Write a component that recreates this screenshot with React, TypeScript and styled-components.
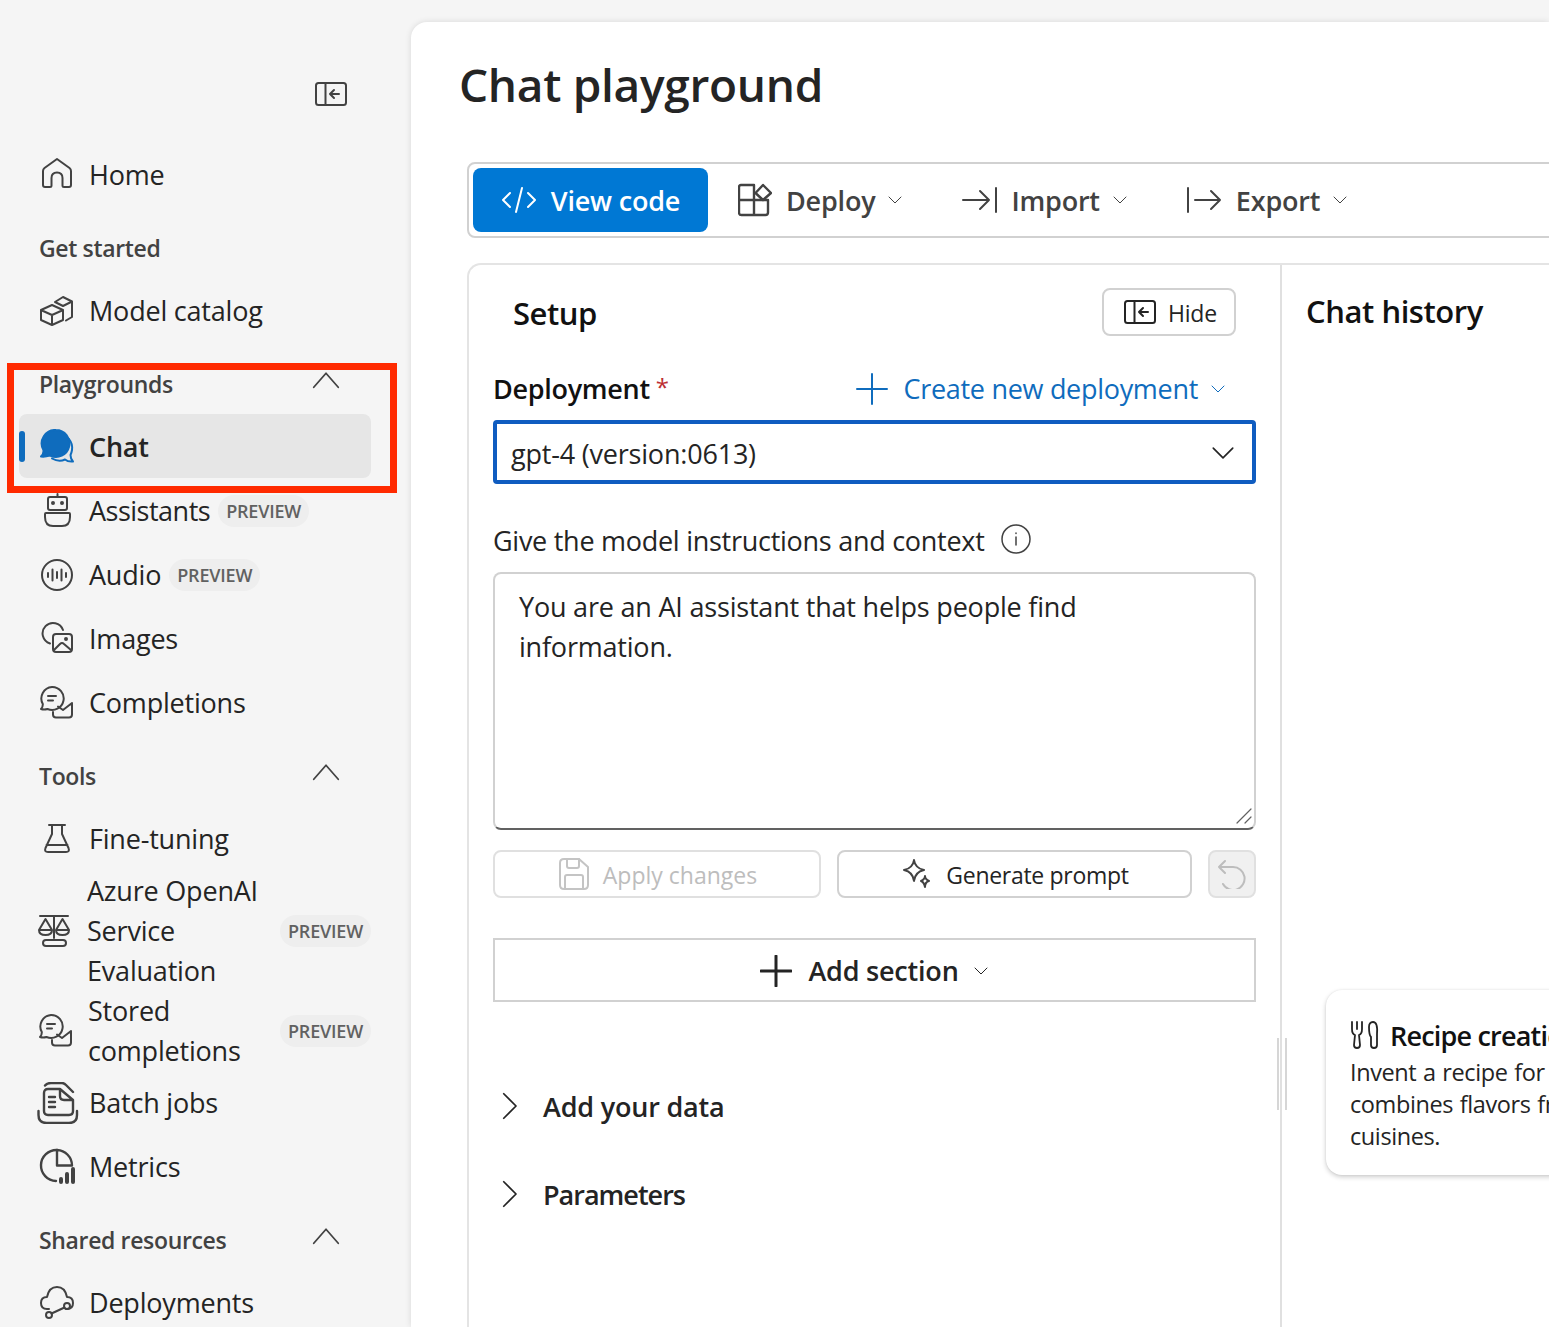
import * as React from 'react';
import styled, { createGlobalStyle } from 'styled-components';

const GlobalStyle = createGlobalStyle`
  html, body {
    margin: 0;
    padding: 0;
    background: #f5f5f5;
    overflow: hidden;
  }
  * {
    box-sizing: border-box;
  }
`;

const fontStack = `"Open Sans", "Noto Sans", "Liberation Sans", sans-serif`;

const Page = styled.div`
  position: relative;
  display: flex;
  width: 1549px;
  height: 1327px;
  overflow: hidden;
  background: #f5f5f5;
  font-family: ${fontStack};
  color: #242424;
  letter-spacing: -0.2px;
`;

const Sidebar = styled.nav`
  flex: none;
  width: 411px;
  padding: 0 40px 0 19px;
`;

const CollapseRow = styled.div`
  display: flex;
  justify-content: flex-end;
  height: 143px;
  padding: 82px 24px 0 0;
`;

const Icon = styled.svg<{ $color?: string; $weight?: number }>`
  flex: none;
  display: block;
  fill: none;
  stroke: ${(p) => p.$color || '#424242'};
  stroke-width: ${(p) => p.$weight || 2};
  stroke-linecap: round;
  stroke-linejoin: round;
`;

const WideIcon = styled(Icon)`
  margin: 0 -4px 0 -2px;
`;

const MetricsGlyph = styled(Icon)`
  margin-right: -2px;
`;

const SectionRow = styled.div`
  display: flex;
  align-items: center;
  justify-content: space-between;
  height: 72px;
  padding: 9px 31px 0 20px;
  font-size: 23px;
  font-weight: 600;
  color: #424242;
  letter-spacing: -0.35px;
`;

const SectionChevron = styled.span`
  display: flex;
  margin-top: -3px;
`;

const NavRow = styled.div<{ $active?: boolean }>`
  position: relative;
  display: flex;
  align-items: center;
  gap: 14px;
  height: 64px;
  padding-left: 20px;
  border-radius: 8px;
  font-size: 27px;
  font-weight: ${(p) => (p.$active ? 600 : 400)};
  line-height: 40px;
  color: #242424;
  background: ${(p) => (p.$active ? '#e6e6e6' : 'transparent')};
  ${(p) => p.$active && 'margin: -1px 0 1px; padding-top: 1px;'}
`;

const WrappedNavRow = styled.div<{ $inset: number }>`
  display: flex;
  align-items: center;
  gap: 14px;
  padding-left: ${(p) => p.$inset}px;
  font-size: 27px;
  line-height: 40px;
  color: #242424;
`;

const ActiveMark = styled.span`
  position: absolute;
  left: 0;
  top: 17px;
  width: 6px;
  height: 31px;
  border-radius: 3px;
  background: #0f6cbd;
`;

const NavLabel = styled.span<{ $tight?: boolean }>`
  flex: none;
  ${(p) => p.$tight && 'letter-spacing: -0.5px;'}
`;

const WrappedLabel = styled.span`
  flex: 1;
  max-width: 190px;
`;

const PreviewBadge = styled.span<{ $end?: boolean }>`
  flex: none;
  display: inline-flex;
  align-items: center;
  justify-content: center;
  width: 91px;
  height: 32px;
  margin-left: ${(p) => (p.$end ? 'auto' : '-6px')};
  border-radius: 16px;
  background: #eeeeee;
  font-size: 18px;
  font-weight: 600;
  color: #616161;
  letter-spacing: -0.2px;
`;

const Main = styled.main`
  flex: 1;
  min-width: 0;
  margin-top: 22px;
  padding: 30px 0 0 48px;
  overflow: hidden;
  background: #ffffff;
  border-top-left-radius: 16px;
  box-shadow: 0 0 6px rgba(0, 0, 0, 0.12);
`;

const Title = styled.h1`
  margin: 0;
  height: 110px;
  font-size: 46px;
  line-height: 64px;
  font-weight: 600;
  color: #242424;
  letter-spacing: -0.3px;
`;

const Toolbar = styled.div`
  display: flex;
  align-items: center;
  width: 1200px;
  height: 76px;
  margin-left: 8px;
  padding: 0 4px;
  border: 2px solid #d1d1d1;
  border-radius: 8px;
`;

const PrimaryButton = styled.div`
  flex: none;
  display: flex;
  align-items: center;
  justify-content: center;
  gap: 14px;
  width: 235px;
  height: 64px;
  border-radius: 8px;
  background: #0078d4;
  color: #ffffff;
  font-size: 27px;
  font-weight: 600;
`;

const ToolButton = styled.div`
  flex: none;
  display: flex;
  align-items: center;
  gap: 14px;
  padding: 0 28px 0 30px;
  font-size: 27px;
  font-weight: 600;
  color: #424242;
`;

const ChevronGap = styled.span<{ $pull?: number }>`
  display: flex;
  margin-left: -${(p) => p.$pull || 2}px;
`;

const Workspace = styled.div`
  position: relative;
  display: flex;
  width: 1200px;
  height: 1100px;
  margin: 25px 0 0 8px;
  border-top: 2px solid #e4e4e4;
  border-left: 2px solid #e4e4e4;
  border-top-left-radius: 14px;
`;

const SetupPane = styled.section`
  flex: none;
  width: 813px;
  padding: 23px 24px 0;
  border-right: 2px solid #e0e0e0;
`;

const SetupHead = styled.div`
  display: flex;
  align-items: center;
  justify-content: space-between;
  height: 48px;
  padding: 0 20px;
`;

const PaneTitle = styled.h2`
  margin: 0;
  font-size: 31px;
  line-height: 46px;
  font-weight: 600;
  color: #111111;
  letter-spacing: -0.45px;
`;

const SetupTitle = styled(PaneTitle)`
  padding-top: 2px;
`;

const ButtonText = styled.span`
  padding-top: 2px;
`;

const HideButton = styled.div`
  display: flex;
  align-items: center;
  gap: 12px;
  width: 134px;
  height: 48px;
  padding-left: 20px;
  border: 2px solid #d1d1d1;
  border-radius: 8px;
  font-size: 23px;
  color: #242424;
`;

const DeploymentRow = styled.div`
  display: flex;
  align-items: center;
  justify-content: space-between;
  height: 84px;
  padding: 21px 30px 0 0;
`;

const FieldLabel = styled.span`
  display: flex;
  font-size: 27px;
  font-weight: 600;
  letter-spacing: -0.3px;
  color: #111111;
`;

const Required = styled.span`
  margin-left: 6px;
  font-size: 24px;
  font-weight: 400;
  color: #bc2f32;
`;

const CreateLink = styled.span`
  display: flex;
  align-items: center;
  gap: 16px;
  font-size: 27px;
  letter-spacing: -0.3px;
  color: #0f6cbd;
`;

const SelectBox = styled.div`
  display: flex;
  align-items: center;
  justify-content: space-between;
  height: 64px;
  padding: 2px 16px 0 14px;
  border: 4px solid #0f5cc0;
  border-radius: 4px;
  font-size: 27px;
  color: #242424;
`;

const InstructionRow = styled.div`
  display: flex;
  align-items: center;
  gap: 16px;
  height: 88px;
  padding-top: 24px;
  font-size: 27px;
  letter-spacing: -0.27px;
  color: #242424;
`;

const PromptBox = styled.div`
  position: relative;
  height: 258px;
  padding: 13px 24px;
  border: 2px solid #d1d1d1;
  border-bottom-color: #616161;
  border-radius: 8px;
  font-size: 27px;
  line-height: 40px;
  color: #242424;
`;

const ResizeGrip = styled.span`
  position: absolute;
  right: 1px;
  bottom: 3px;
  display: flex;
`;

const Actions = styled.div`
  display: flex;
  gap: 16px;
  height: 48px;
  margin-top: 20px;
`;

const ActionButton = styled.div<{ $width: number; $disabled?: boolean }>`
  flex: none;
  display: flex;
  align-items: center;
  justify-content: center;
  gap: 14px;
  width: ${(p) => p.$width}px;
  padding-left: 2px;
  border: 2px solid ${(p) => (p.$disabled ? '#e0e0e0' : '#d1d1d1')};
  border-radius: 8px;
  font-size: 23px;
  letter-spacing: ${(p) => (p.$disabled ? '0' : '-0.3px')};
  color: ${(p) => (p.$disabled ? '#bdbdbd' : '#242424')};
`;

const UndoButton = styled.div`
  flex: none;
  display: flex;
  align-items: center;
  justify-content: center;
  width: 48px;
  border: 2px solid #e0e0e0;
  border-radius: 8px;
  background: #f0f0f0;
`;

const AddSection = styled.div`
  display: flex;
  align-items: center;
  justify-content: center;
  gap: 16px;
  height: 64px;
  margin-top: 40px;
  padding-top: 1px;
  border: 2px solid #d1d1d1;
  font-size: 27px;
  font-weight: 600;
  color: #242424;
`;

const AccordionList = styled.div`
  margin-top: 60px;
`;

const AccordionRow = styled.div`
  display: flex;
  align-items: center;
  gap: 20px;
  height: 88px;
  padding-left: 2px;
  font-size: 27px;
  font-weight: 600;
  color: #242424;
`;

const AccordionLabel = styled.span<{ $tight?: boolean }>`
  ${(p) => p.$tight && 'letter-spacing: -1px;'}
`;

const DragHandle = styled.div`
  position: absolute;
  left: 808px;
  top: 773px;
  width: 10px;
  height: 72px;
  border-left: 2px solid #d6d6d6;
  border-right: 2px solid #d6d6d6;
`;

const HistoryPane = styled.section`
  flex: 1;
  padding: 23px 0 0 24px;
`;

const Card = styled.div`
  width: 430px;
  height: 185px;
  margin: 656px 0 0 20px;
  padding: 27px 24px;
  border-radius: 16px;
  background: #ffffff;
  box-shadow: 0 2px 5px rgba(0, 0, 0, 0.2), 0 0 2px rgba(0, 0, 0, 0.08);
`;

const CardTitle = styled.div`
  display: flex;
  align-items: center;
  gap: 10px;
  height: 36px;
  font-size: 27px;
  font-weight: 600;
  letter-spacing: -0.8px;
  color: #111111;
  white-space: nowrap;
`;

const CardBody = styled.div`
  margin-top: 3px;
  font-size: 23.5px;
  line-height: 32px;
  letter-spacing: -0.4px;
  word-spacing: 1px;
  color: #242424;
`;

const RedBox = styled.div`
  position: absolute;
  left: 7px;
  top: 363px;
  width: 390px;
  height: 130px;
  border: 7px solid #ff2a00;
  pointer-events: none;
`;

const ChevronIcon = styled(Icon)`
  stroke-width: 1;
`;

const Chevron = ({ size = 16, dir = 'down', color }: { size?: number; dir?: 'down' | 'up' | 'right'; color?: string }) => {
  const points = dir === 'down' ? '2,5 8,11 14,5' : dir === 'up' ? '1,11 8,3 15,11' : '5,1 12,8 5,15';
  return (
    <ChevronIcon width={size} height={size} viewBox="0 0 16 16" $color={color}>
      <polyline points={points} />
    </ChevronIcon>
  );
};

const CollapseChevron = () => (
  <SectionChevron>
    <Chevron size={28} dir="up" />
  </SectionChevron>
);

const PanelIcon = ({ color }: { color?: string }) => (
  <Icon width="32" height="24" viewBox="0 0 32 24" $color={color}>
    <rect x="1" y="1" width="30" height="22" rx="2.5" />
    <path d="M10.5 1v22M24 12H15M19 8l-4 4 4 4" />
  </Icon>
);

const HomeIcon = () => (
  <Icon width="36" height="36" viewBox="0 0 36 36">
    <path d="M18 2 5.500 11Q4 12.200 4 14V28Q4 30 6 30h5q1.500 0 1.500-1.500V21q0-5.500 5.500-5.500t5.500 5.500v7.500Q23.500 30 25 30h5q2 0 2-2V14q0-1.800-1.500-3z" />
  </Icon>
);

const CubeIcon = () => (
  <Icon width="36" height="36" viewBox="0 0 36 36">
    <path d="M13 12 24 17V27L13 32 2 27V17zM3 17.500 13 22 23 17.500M13 22V32" />
    <path d="M16 9 24 4l9 4.500V24L27 27.500M16 9l8 4 9-4.500" />
  </Icon>
);

const ChatIcon = () => (
  <Icon width="36" height="36" viewBox="0 0 36 36" $color="#0f6cbd">
    <path fill="#0f6cbd" d="M17 1a13.500 13.500 0 1 1-6 25.600Q6 28 2 27.500q3-3 2.400-6.500A13.500 13.500 0 0 1 17 1z" />
    <path d="M30 10q4 5 3 11-.5 3-1.500 5 0 4 2.500 6.500-5 .5-8-2-6 3-13-1" />
  </Icon>
);

const RobotIcon = () => (
  <Icon width="36" height="36" viewBox="0 0 36 36">
    <rect x="9" y="4" width="19" height="13" rx="2" />
    <path d="M18.500 1v3" />
    <circle cx="14" cy="10" r="1" />
    <circle cx="23" cy="10" r="1" />
    <path d="M6 21q0-1 1-1H30q1 0 1 1v3q0 9-8 9H14q-8 0-8-9z" />
  </Icon>
);

const AudioIcon = () => (
  <Icon width="36" height="36" viewBox="0 0 36 36">
    <circle cx="18" cy="18" r="15" />
    <path d="M9 16v4M13.500 12.500v11M18 15v6M22.500 12.500v11M27 16v4" />
  </Icon>
);

const ImagesIcon = () => (
  <Icon width="36" height="36" viewBox="0 0 36 36">
    <path d="M11 22.500A10.500 10.500 0 1 1 24 9" />
    <rect x="14" y="13" width="19" height="18" rx="3" />
    <path d="M15 29l6-6q2-2 4 0l7 6" />
    <circle cx="27" cy="18" r="1" />
  </Icon>
);

const CompletionsIcon = () => (
  <Icon width="36" height="36" viewBox="0 0 36 36">
    <path d="M13 2a11.500 11.500 0 1 1-4.500 22Q5 25 2 24q2-2 1.800-5A11.500 11.500 0 0 1 13 2z" />
    <path d="M9 11h8M9 15.500h5" />
    <path d="M14 27v2.500q0 3 3 3H30q3 0 3-3V18L24 25 19 21.500" />
  </Icon>
);

const FlaskIcon = () => (
  <Icon width="36" height="36" viewBox="0 0 36 36">
    <path d="M10 4H26M13 4V13L6.500 27Q5 31 9 31H27Q31 31 29.500 27L23 13V4M7.500 24H28.500" />
  </Icon>
);

const ScalesIcon = () => (
  <Icon width="36" height="36" viewBox="0 0 36 36">
    <path d="M3 3H31M17 3V25" />
    <path d="M8.500 6 2 17h13zM2 17q0 5 6.500 5t6.500-5" />
    <path d="M25.500 6 19 17h13zM19 17q0 5 6.500 5t6.500-5" />
    <rect x="6" y="27" width="23" height="6" rx="3" />
  </Icon>
);

const BatchIcon = () => (
  <WideIcon width="42" height="42" viewBox="0 0 42 42" $weight={2.4}>
    <path d="M8 3.500Q10 1 14 1H25Q27 1 29 3L36 10" />
    <path d="M7 11q0-4 4-4H23L36 18V29q0 4-4 4H11q-4 0-4-4zM23 8v6q0 4 4 4h8" />
    <path d="M12 15h6M12 20h6M12 25h6" />
    <path d="M1.500 29v4q0 8 8 8H32q8 0 8-8V29" />
  </WideIcon>
);

const MetricsIcon = () => (
  <MetricsGlyph width="38" height="38" viewBox="0 0 38 38" $weight={2.4}>
    <path d="M18 2A15.500 15.500 0 1 0 17 33" />
    <path d="M18 2A15.500 15.500 0 0 1 33 17.500H18z" />
    <path d="M22 31v3M28 26v8M34 21v13" strokeWidth={4} />
  </MetricsGlyph>
);

const CloudIcon = () => (
  <Icon width="36" height="36" viewBox="0 0 36 36">
    <path d="M10 24H8Q2 24 2 18T8 12Q10 2 18 2T28 12Q34 12 34 18T28 24H27" />
    <circle cx="10" cy="30" r="3" />
    <circle cx="28" cy="21" r="3" />
    <path d="M12.500 28.500 25.500 22.500" />
  </Icon>
);

const CodeIcon = () => (
  <Icon width="36" height="32" viewBox="0 0 36 32" $color="#ffffff">
    <path d="M9 9 2 16l7 7M27 9l7 7-7 7M21 4 15 28" />
  </Icon>
);

const DeployIcon = () => (
  <Icon width="34" height="34" viewBox="0 0 34 34" $weight={2.4}>
    <path d="M1 17V4Q1 2 3 2H16V32M1 17H30V29.500Q30 32 27.500 32H3.500Q1 32 1 29.500z" />
    <path d="M25 2 33 10 25 17 17.500 10z" />
  </Icon>
);

const ImportIcon = () => (
  <Icon width="36" height="28" viewBox="0 0 36 28">
    <path d="M2 14H28M19 5l9 9-9 9M35 2V26" />
  </Icon>
);

const ExportIcon = () => (
  <Icon width="36" height="28" viewBox="0 0 36 28">
    <path d="M2 2V26M9 14H34M25 5l9 9-9 9" />
  </Icon>
);

const PlusIcon = ({ color, weight }: { color?: string; weight?: number }) => (
  <Icon width="32" height="32" viewBox="0 0 32 32" $color={color} $weight={weight}>
    <path d="M16 1V31M1 16H31" />
  </Icon>
);

const InfoGlyph = styled(Icon)`
  stroke-width: 1.5;
  margin-top: -2px;
`;

const InfoIcon = () => (
  <InfoGlyph width="30" height="30" viewBox="0 0 30 30">
    <circle cx="15" cy="15" r="14" />
    <path d="M15 13v8M15 9v.5" />
  </InfoGlyph>
);

const SaveIcon = () => (
  <Icon width="30" height="32" viewBox="0 0 30 32" $color="#c4c4c4">
    <path d="M1 5q0-4 4-4H20L29 9V27q0 4-4 4H5q-4 0-4-4z" />
    <path d="M8 1V8q0 2 2 2H18q2 0 2-2V1M6 31V19q0-2 2-2H22q2 0 2 2V31" />
  </Icon>
);

const SparkleIcon = () => (
  <Icon width="30" height="30" viewBox="0 0 30 30">
    <path d="M12 1q1 8 10 10-9 2-10 11Q11 13 2 11 11 9 12 1z" />
    <path d="M23 17q0 3 4 5-4 1-4 6-1-5-4-6 4-2 4-5z" />
  </Icon>
);

const UndoIcon = () => (
  <Icon width="30" height="30" viewBox="0 0 30 30" $color="#bdbdbd">
    <path d="M8 2 2 8l6 6M2 8H16A11.500 11.500 0 1 1 6 25" />
  </Icon>
);

const CutleryIcon = () => (
  <Icon width="30" height="30" viewBox="0 0 30 30" $color="#242424" $weight={1.8}>
    <path d="M2 2V9Q2 14 5 15L4 25Q4 28 7 28T10 25L9 15Q12 14 12 9V2M7 2V9" />
    <path d="M19 7Q19 2 23 2 28 2 27 14V25Q27 28 24 28T21 25V17Q19 15 19 7z" />
  </Icon>
);

const GripIcon = () => (
  <Icon width="18" height="18" viewBox="0 0 18 18" $color="#616161" $weight={1.2}>
    <path d="M2 16 16 2M10 16l6-6" />
  </Icon>
);

const App = () => (
  <Page>
    <GlobalStyle />
    <Sidebar>
      <CollapseRow>
        <PanelIcon />
      </CollapseRow>
      <NavRow><HomeIcon /><NavLabel>Home</NavLabel></NavRow>
      <SectionRow>Get started</SectionRow>
      <NavRow><CubeIcon /><NavLabel>Model catalog</NavLabel></NavRow>
      <SectionRow>Playgrounds<CollapseChevron /></SectionRow>
      <NavRow $active>
        <ActiveMark />
        <ChatIcon />
        <NavLabel>Chat</NavLabel>
      </NavRow>
      <NavRow><RobotIcon /><NavLabel $tight>Assistants</NavLabel><PreviewBadge>PREVIEW</PreviewBadge></NavRow>
      <NavRow><AudioIcon /><NavLabel>Audio</NavLabel><PreviewBadge>PREVIEW</PreviewBadge></NavRow>
      <NavRow><ImagesIcon /><NavLabel>Images</NavLabel></NavRow>
      <NavRow><CompletionsIcon /><NavLabel>Completions</NavLabel></NavRow>
      <SectionRow>Tools<CollapseChevron /></SectionRow>
      <NavRow><FlaskIcon /><NavLabel>Fine-tuning</NavLabel></NavRow>
      <WrappedNavRow $inset={18}>
        <ScalesIcon />
        <WrappedLabel>Azure OpenAI Service Evaluation</WrappedLabel>
        <PreviewBadge $end>PREVIEW</PreviewBadge>
      </WrappedNavRow>
      <WrappedNavRow $inset={19}>
        <CompletionsIcon />
        <WrappedLabel>Stored completions</WrappedLabel>
        <PreviewBadge $end>PREVIEW</PreviewBadge>
      </WrappedNavRow>
      <NavRow><BatchIcon /><NavLabel>Batch jobs</NavLabel></NavRow>
      <NavRow><MetricsIcon /><NavLabel>Metrics</NavLabel></NavRow>
      <SectionRow>Shared resources<CollapseChevron /></SectionRow>
      <NavRow><CloudIcon /><NavLabel>Deployments</NavLabel></NavRow>
    </Sidebar>

    <Main>
      <Title>Chat playground</Title>
      <Toolbar>
        <PrimaryButton><CodeIcon />View code</PrimaryButton>
        <ToolButton><DeployIcon />Deploy<ChevronGap><Chevron /></ChevronGap></ToolButton>
        <ToolButton><ImportIcon />Import<ChevronGap><Chevron /></ChevronGap></ToolButton>
        <ToolButton><ExportIcon />Export<ChevronGap><Chevron /></ChevronGap></ToolButton>
      </Toolbar>

      <Workspace>
        <SetupPane>
          <SetupHead>
            <SetupTitle>Setup</SetupTitle>
            <HideButton><PanelIcon color="#242424" /><ButtonText>Hide</ButtonText></HideButton>
          </SetupHead>
          <DeploymentRow>
            <FieldLabel>Deployment<Required>*</Required></FieldLabel>
            <CreateLink>
              <PlusIcon color="#0f6cbd" />
              Create new deployment
              <ChevronGap $pull={4}><Chevron color="#0f6cbd" /></ChevronGap>
            </CreateLink>
          </DeploymentRow>
          <SelectBox>
            gpt-4 (version:0613)
            <Chevron size={26} color="#242424" />
          </SelectBox>
          <InstructionRow>
            Give the model instructions and context
            <InfoIcon />
          </InstructionRow>
          <PromptBox>
            You are an AI assistant that helps people find
            <br />
            information.
            <ResizeGrip><GripIcon /></ResizeGrip>
          </PromptBox>
          <Actions>
            <ActionButton $width={328} $disabled><SaveIcon /><ButtonText>Apply changes</ButtonText></ActionButton>
            <ActionButton $width={355}><SparkleIcon /><ButtonText>Generate prompt</ButtonText></ActionButton>
            <UndoButton><UndoIcon /></UndoButton>
          </Actions>
          <AddSection>
            <PlusIcon color="#242424" weight={3} />
            Add section
            <ChevronGap><Chevron color="#242424" /></ChevronGap>
          </AddSection>
          <AccordionList>
            <AccordionRow><Chevron size={28} dir="right" color="#242424" /><AccordionLabel>Add your data</AccordionLabel></AccordionRow>
            <AccordionRow><Chevron size={28} dir="right" color="#242424" /><AccordionLabel $tight>Parameters</AccordionLabel></AccordionRow>
          </AccordionList>
        </SetupPane>
        <DragHandle />
        <HistoryPane>
          <PaneTitle>Chat history</PaneTitle>
          <Card>
            <CardTitle><CutleryIcon />Recipe creation</CardTitle>
            <CardBody>Invent a recipe for a dish that combines flavors from different cuisines.</CardBody>
          </Card>
        </HistoryPane>
      </Workspace>
    </Main>
    <RedBox />
  </Page>
);

export default App;
